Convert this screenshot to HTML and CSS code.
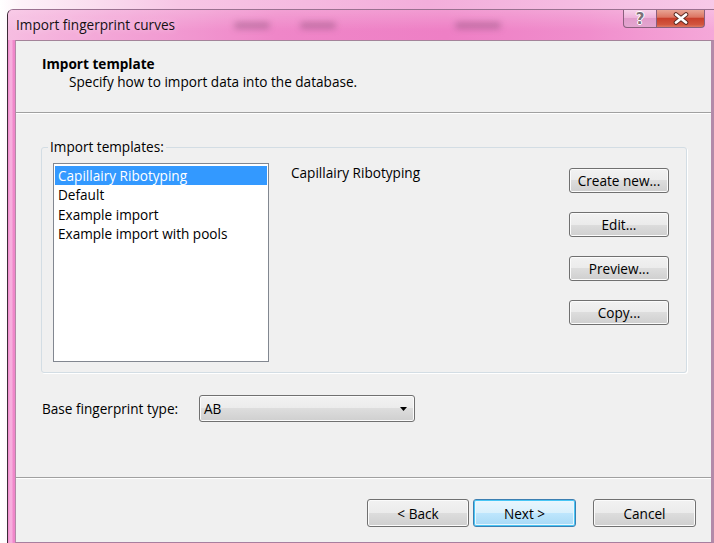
FILE: index.html
```html
<!DOCTYPE html>
<html lang="en">
<head>
<meta charset="utf-8">
<title>Import fingerprint curves</title>
<link rel="stylesheet" href="styles.css">
</head>
<body>
<div class="window">
  <div class="titlebar">
    <span class="title">Import fingerprint curves</span>
    <span class="haze haze-a"></span>
    <span class="haze haze-b"></span>
    <span class="haze haze-c"></span>
    <div class="caption-buttons">
      <span class="cap-btn help">?</span>
      <span class="cap-btn close">
        <svg width="18" height="13" viewBox="0 0 18 13">
          <path d="M4 2.5 L14 10.5 M14 2.5 L4 10.5" stroke="#5a2a22" stroke-width="4.6" stroke-linecap="round"/>
          <path d="M4 2.5 L14 10.5 M14 2.5 L4 10.5" stroke="#ffffff" stroke-width="2.8" stroke-linecap="round"/>
        </svg>
      </span>
    </div>
  </div>

  <div class="client">
    <div class="header">
      <div class="header-title">Import template</div>
      <div class="header-sub">Specify how to import data into the database.</div>
    </div>

    <div class="body">
      <fieldset class="group">
        <legend>Import templates:</legend>
        <div class="group-row">
          <ul class="listbox">
            <li class="selected">Capillairy Ribotyping</li>
            <li>Default</li>
            <li>Example import</li>
            <li>Example import with pools</li>
          </ul>
          <div class="template-name">Capillairy Ribotyping</div>
          <div class="side-buttons">
            <button class="btn">Create new...</button>
            <button class="btn">Edit...</button>
            <button class="btn">Preview...</button>
            <button class="btn">Copy...</button>
          </div>
        </div>
      </fieldset>

      <div class="type-row">
        <span class="type-label">Base fingerprint type:</span>
        <div class="combo">
          <span>AB</span>
          <svg class="combo-arrow" width="8" height="4" viewBox="0 0 8 4"><path d="M0 0 H7 L3.5 4 Z" fill="#000"/></svg>
        </div>
      </div>
    </div>

    <div class="footer">
      <button class="btn nav back">&lt; Back</button>
      <button class="btn nav default">Next &gt;</button>
      <button class="btn nav cancel">Cancel</button>
    </div>
  </div>
</div>
</body>
</html>
```

FILE: styles.css
```css
html, body {
  margin: 0;
  height: 100%;
}

body {
  overflow: hidden;
  background: linear-gradient(to right, #ffffff 0, #fdf1f8 3%, #f7c6e5 25%, #f3aedb 60%, #f7c9e8 100%);
  font-family: "Open Sans", "Noto Sans", sans-serif;
  font-size: 13.6px;
  color: #000;
}

/* outer window frame */
.window {
  margin: 9px 0 0 7px;
  width: 707px;
  height: 534px;
  box-sizing: border-box;
  border-left: 1px solid #3b2a36;
  border-top: 1px solid #9a7090;
  border-top-left-radius: 6px;
  display: flex;
  flex-direction: column;
  background: linear-gradient(to right, #ee86c9 0, #f7aede 2px, #f7aede 4px, #f089cb 5px, #ef86c9 7px, #ef86c9 100%);
}

.titlebar {
  position: relative;
  height: 30px;
  flex: none;
  display: flex;
  align-items: flex-start;
  border-top-left-radius: 5px;
  background:
    linear-gradient(rgba(255, 255, 255, 0.22), rgba(255, 255, 255, 0) 70%),
    linear-gradient(to right, #f6bde1 0, #f3a6d7 14%, #ef86c8 38%, #ee7fc5 62%, #f08dcc 82%, #f5a8d9 100%);
}

.title {
  margin: 7px 0 0 8px;
  line-height: 16px;
  color: #161014;
  text-shadow: 0 0 6px rgba(255, 255, 255, 0.6);
}

/* windows behind the glass title bar */
.haze {
  position: absolute;
  top: 12px;
  height: 7px;
  border-radius: 4px;
  background: rgba(110, 60, 95, 0.35);
  filter: blur(3px);
}
.haze-a { left: 226px; width: 36px; }
.haze-b { left: 292px; width: 36px; }
.haze-c { left: 447px; width: 46px; }

.caption-buttons {
  margin-left: auto;
  margin-right: 9px;
  display: flex;
  height: 18px;
}

.cap-btn {
  box-sizing: border-box;
  height: 18px;
  border: 1px solid #8a5f7d;
  border-top: none;
  display: flex;
  align-items: center;
  justify-content: center;
}

.help {
  width: 34px;
  border-bottom-left-radius: 4px;
  background: linear-gradient(#f7d2ea 0, #eeb2da 45%, #e19ccb 50%, #e3a6d0 100%);
  font-family: "DejaVu Sans", sans-serif;
  font-weight: bold;
  font-size: 15px;
  line-height: 18px;
  color: #7b7079;
  text-shadow: 1px 0 #fff, -1px 0 #fff, 0 1px #fff, 0 -1px #fff;
}

.close {
  width: 48px;
  border-left: none;
  border-bottom-right-radius: 4px;
  background: linear-gradient(#e9a494 0, #dc7562 42%, #c9402c 50%, #d2553f 85%, #de7a62 100%);
}

/* client area */
.client {
  flex: 1;
  margin-left: 7px;
  border-left: 1px solid #b38aa8;
  border-top: 1px solid #a4849a;
  border-right: 3px solid #b38aa9;
  border-bottom: 1px solid #a87f9f;
  background: #f0f0f0;
  display: flex;
  flex-direction: column;
}

.header {
  flex: none;
  height: 72px;
  box-sizing: border-box;
  padding: 15px 0 0 26px;
  border-bottom: 1px solid #a0a0a0;
  box-shadow: 0 1px 0 #ffffff;
}

.header-title {
  font-weight: bold;
  line-height: 16px;
}

.header-sub {
  margin-top: 2px;
  padding-left: 27px;
  line-height: 16px;
}

.body {
  flex: 1;
  display: flex;
  flex-direction: column;
}

.group {
  margin: 26px 24px 0 25px;
  padding: 8px 17px 10px 11px;
  border: 1px solid #d3dde4;
  border-radius: 3px;
  box-shadow: 1px 1px 0 #ffffff;
  min-width: 0;
}

.group legend {
  margin-left: -5px;
  padding: 0 2px;
  line-height: 16px;
}

.group-row {
  display: flex;
  align-items: flex-start;
}

.listbox {
  width: 216px;
  height: 199px;
  box-sizing: border-box;
  margin: 0;
  padding: 2px 1px;
  list-style: none;
  background: #ffffff;
  border: 1px solid #828790;
}

.listbox li {
  height: 19.4px;
  line-height: 19px;
  padding-left: 3px;
  white-space: nowrap;
}

.listbox li.selected {
  background: #3399ff;
  color: #ffffff;
}

.template-name {
  flex: 1;
  margin-left: 22px;
  padding-top: 2px;
  line-height: 16px;
}

.side-buttons {
  width: 100px;
  padding-top: 5px;
  display: flex;
  flex-direction: column;
  gap: 19px;
}

.btn {
  font: inherit;
  color: #000;
  height: 25px;
  width: 100px;
  padding: 0;
  border: 1px solid #707070;
  border-radius: 3px;
  background: linear-gradient(#f2f2f2 0, #ebebeb 50%, #dddddd 50%, #cfcfcf 100%);
  box-shadow: inset 0 0 0 1px #fbfbfb;
}

.type-row {
  margin-top: 22px;
  padding-left: 26px;
  display: flex;
  align-items: center;
}

.type-label {
  width: 157px;
  flex: none;
}

.combo {
  width: 216px;
  height: 27px;
  box-sizing: border-box;
  border: 1px solid #707070;
  border-radius: 3px;
  background: linear-gradient(#f2f2f2 0, #ebebeb 50%, #dddddd 50%, #cfcfcf 100%);
  box-shadow: inset 0 0 0 1px #fbfbfb;
  display: flex;
  align-items: center;
  padding: 0 6px 0 4px;
}

.combo span {
  flex: 1;
}

.footer {
  flex: none;
  height: 65px;
  box-sizing: border-box;
  border-top: 1px solid #a0a0a0;
  box-shadow: inset 0 1px 0 #ffffff;
  padding: 21px 15px 0 0;
  display: flex;
  justify-content: flex-end;
  align-items: flex-start;
}

.btn.nav {
  height: 28px;
  width: 103px;
}

.btn.back {
  width: 102px;
}

.btn.default {
  margin-left: 4px;
  border-color: #3c7fb1;
  background: linear-gradient(#eaf6fd 0, #d9f0fc 50%, #bee6fd 50%, #a7d9f5 100%);
  box-shadow: inset 0 0 0 1px #48c6f5, inset 0 0 0 2px #eaf6fd;
}

.btn.cancel {
  margin-left: 17px;
}
```
